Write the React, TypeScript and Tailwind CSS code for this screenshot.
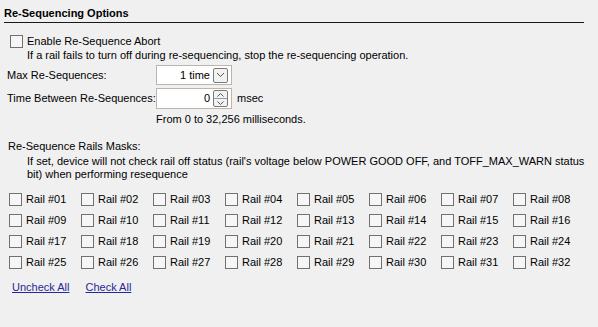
import React from "react";

const Box = () => (
  <span className="block w-[13px] h-[13px] shrink-0 border border-[#717171] bg-[#f6f6f6]" />
);

const Check = ({ label }: { label: string }) => (
  <label className="flex items-center gap-[4px] h-[21px]">
    <Box />
    <span>{label}</span>
  </label>
);

const rails = Array.from({ length: 32 }, (_, i) => `Rail #${String(i + 1).padStart(2, "0")}`);

export default function App() {
  return (
    <div
      className="w-[598px] h-[327px] bg-[#f0f0f0] text-black text-[11px] leading-[13px] pl-[4px] pr-[14px] pt-[7px] overflow-hidden"
      style={{ fontFamily: '"Liberation Sans", Arial, sans-serif' }}
    >
      <div className="font-bold border-b border-[#1a1a1a] pb-[2px]">Re-Sequencing Options</div>

      <div className="mt-[12px] pl-[6px] flex items-center gap-[4px] h-[13px]">
        <Box />
        <span>Enable Re-Sequence Abort</span>
      </div>
      <div className="pl-[23px] mt-[1px]">
        If a rail fails to turn off during re-sequencing, stop the re-sequencing operation.
      </div>

      <div className="mt-[3px] flex items-center pl-[3px]">
        <span className="w-[149px] shrink-0 whitespace-nowrap">Max Re-Sequences:</span>
        <div className="w-[76px] h-[20px] border border-[#bdb5ac] bg-white flex items-center justify-end pr-[3px] gap-[3px]">
          <span>1 time</span>
          <span className="w-[15px] h-[15px] border border-[#7a7a7a] rounded-[2px] bg-[#f2f2f2] flex items-center justify-center">
            <svg width="9" height="6" viewBox="0 0 9 6">
              <path d="M1 1l3.5 3.5L8 1" fill="none" stroke="#555" strokeWidth="1" />
            </svg>
          </span>
        </div>
      </div>

      <div className="mt-[3px] flex items-center pl-[3px]">
        <span className="w-[149px] shrink-0 whitespace-nowrap">Time Between Re-Sequences:</span>
        <div className="w-[76px] h-[21px] border border-[#bdb5ac] bg-white flex items-center justify-end pr-[3px] gap-[3px]">
          <span>0</span>
          <span className="w-[15px] h-[17px] border border-[#7a7a7a] rounded-[2px] bg-[#f2f2f2] flex flex-col">
            <span className="flex-1 flex items-center justify-center border-b border-[#9a9a9a]">
              <svg width="7" height="4" viewBox="0 0 7 4">
                <path d="M0.5 3.5L3.5 0.5L6.5 3.5" fill="none" stroke="#555" strokeWidth="1" />
              </svg>
            </span>
            <span className="flex-1 flex items-center justify-center">
              <svg width="7" height="4" viewBox="0 0 7 4">
                <path d="M0.5 0.5L3.5 3.5L6.5 0.5" fill="none" stroke="#555" strokeWidth="1" />
              </svg>
            </span>
          </span>
        </div>
        <span className="ml-[5px]">msec</span>
      </div>
      <div className="pl-[152px] mt-[4px]">From 0 to 32,256 milliseconds.</div>

      <div className="pl-[4px] mt-[14px]">Re-Sequence Rails Masks:</div>
      <div className="pl-[23px] mt-[2px] whitespace-nowrap">
        If set, device will not check rail off status (rail's voltage below POWER GOOD OFF, and TOFF_MAX_WARN status
        <br />
        bit) when performing resequence
      </div>

      <div className="mt-[8px] pl-[5px] grid grid-cols-[repeat(8,72px)]">
        {rails.map((r) => (
          <Check key={r} label={r} />
        ))}
      </div>

      <div className="mt-[8px] pl-[8px] flex gap-[16px] text-[#27279a] underline">
        <span>Uncheck All</span>
        <span>Check All</span>
      </div>
    </div>
  );
}
